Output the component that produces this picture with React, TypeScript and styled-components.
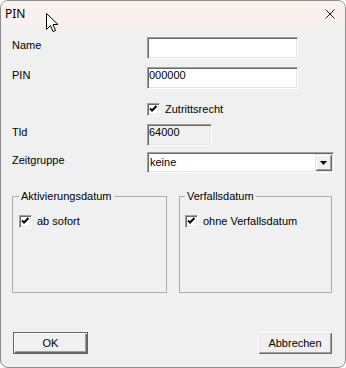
import React from "react";
import styled, { createGlobalStyle } from "styled-components";

const Global = createGlobalStyle`
  html, body { margin: 0; padding: 0; background: #ffffff; }
  * { box-sizing: border-box; }
`;

const Window = styled.div`
  position: relative;
  width: 346px;
  height: 368px;
  border: 1px solid #8c8c8c;
  border-radius: 8px;
  overflow: hidden;
  background: #f0f0f0;
  display: flex;
  flex-direction: column;
  font-family: "Liberation Sans", Arial, sans-serif;
  font-size: 11px;
  line-height: 13px;
  color: #000;
`;

const TitleBar = styled.div`
  height: 25px;
  flex: none;
  background: #f9f1ee;
  display: flex;
  align-items: center;
  justify-content: space-between;
  padding: 0 10px 0 4px;
`;

const Title = styled.span`
  font-family: "Noto Sans", "Open Sans", sans-serif;
  font-size: 12px;
  line-height: 16px;
  color: #000;
`;

const CloseIcon = styled.svg`
  width: 10px;
  height: 10px;
  display: block;
`;

const Cursor = styled.svg`
  position: absolute;
  left: 45px;
  top: 12px;
  width: 13px;
  height: 20px;
`;

const Body = styled.div`
  flex: 1;
  display: flex;
  flex-direction: column;
  padding: 0 13px 0 11px;
`;

const Row = styled.div<{ $mt: number; $h: number }>`
  display: grid;
  grid-template-columns: 135px auto;
  align-items: start;
  margin-top: ${(p) => p.$mt}px;
  height: ${(p) => p.$h}px;
`;

const Label = styled.span`
  padding-top: 2px;
  white-space: nowrap;
`;

const Edit = styled.div<{ $w: number; $bg?: string }>`
  width: ${(p) => p.$w}px;
  height: 22px;
  background: ${(p) => p.$bg || "#ffffff"};
  border: 1px solid;
  border-color: #a0a0a0 #ffffff #ffffff #a0a0a0;
  box-shadow: inset 1px 1px 0 #696969, inset -1px -1px 0 #e3e3e3;
  padding: 1px 2px 0 1px;
  white-space: nowrap;
`;

const Select = styled.div`
  width: 187px;
  height: 21px;
  background: #ffffff;
  border: 1px solid;
  border-color: #a0a0a0 #ffffff #ffffff #a0a0a0;
  box-shadow: inset 1px 1px 0 #696969, inset -1px -1px 0 #e3e3e3;
  padding: 1px 1px 1px 2px;
  display: flex;
  align-items: center;
  justify-content: space-between;
`;

const DropButton = styled.span`
  width: 17px;
  height: 17px;
  background: #f0f0f0;
  box-shadow: inset 1px 1px 0 #e3e3e3, inset -1px -1px 0 #696969,
    inset 2px 2px 0 #ffffff, inset -2px -2px 0 #a0a0a0;
  display: flex;
  align-items: center;
  justify-content: center;
`;

const CheckRow = styled.label`
  display: flex;
  align-items: center;
  gap: 5px;
  height: 20px;
  white-space: nowrap;
`;

const Box = styled.span`
  width: 13px;
  height: 13px;
  flex: none;
  background: #ffffff;
  border: 1px solid;
  border-color: #a0a0a0 #ffffff #ffffff #a0a0a0;
  box-shadow: inset 1px 1px 0 #696969, inset -1px -1px 0 #e3e3e3;
  display: flex;
  align-items: center;
  justify-content: center;
`;

const Groups = styled.div`
  display: grid;
  grid-template-columns: 155px 153px;
  column-gap: 12px;
  margin-top: 17px;
  height: 103px;
`;

const Group = styled.fieldset<{ $pl: number }>`
  margin: 0;
  padding: 8px ${(p) => p.$pl}px 0;
  border: 1px solid #adadad;
  min-width: 0;
`;

const Legend = styled.legend`
  padding: 0 2px;
  font-size: 11px;
  line-height: 13px;
`;

const Buttons = styled.div`
  display: flex;
  justify-content: space-between;
  margin-top: 39px;
  padding-left: 1px;
  padding-right: 0;
`;

const Button = styled.button<{ $default?: boolean }>`
  width: ${(p) => (p.$default ? 75 : 74)}px;
  height: 22px;
  font-family: "Liberation Sans", Arial, sans-serif;
  font-size: 11px;
  line-height: 13px;
  color: #000;
  background: #f0f0f0;
  padding: 0;
  border: ${(p) => (p.$default ? "1px solid #646464" : "none")};
  box-shadow: ${(p) =>
    p.$default
      ? "inset 1px 1px 0 #ffffff, inset -1px -1px 0 #696969, inset -2px -2px 0 #a0a0a0"
      : "inset 1px 1px 0 #ffffff, inset -1px -1px 0 #696969, inset 2px 2px 0 #e3e3e3, inset -2px -2px 0 #a0a0a0"};
`;

const Check = () => (
  <Box>
    <svg width="9" height="9" viewBox="0 0 9 9">
      <path d="M1 3.5 L3 5.5 L7.5 1" fill="none" stroke="#000" strokeWidth="2" />
    </svg>
  </Box>
);

export default function App() {
  return (
    <>
      <Global />
      <Window>
        <TitleBar>
          <Title>PIN</Title>
          <CloseIcon viewBox="0 0 10 10">
            <path d="M0.5 0.5 L9.5 9.5 M9.5 0.5 L0.5 9.5" stroke="#1a1a1a" strokeWidth="1" />
          </CloseIcon>
        </TitleBar>
        <Cursor viewBox="0 0 13 20">
          <path
            d="M0.5 0.5 L0.5 16.5 L4.5 12.5 L7 18.5 L9.5 17.5 L7 11.5 L12 11.5 Z"
            fill="#ffffff"
            stroke="#000"
            strokeWidth="1"
            strokeLinejoin="miter"
          />
        </Cursor>
        <Body>
          <Row $mt={11} $h={22}>
            <Label>Name</Label>
            <Edit $w={151} />
          </Row>
          <Row $mt={8} $h={22}>
            <Label>PIN</Label>
            <Edit $w={151}>000000</Edit>
          </Row>
          <Row $mt={10} $h={20}>
            <span />
            <CheckRow>
              <Check />
              Zutrittsrecht
            </CheckRow>
          </Row>
          <Row $mt={5} $h={22}>
            <Label>Tld</Label>
            <Edit $w={65} $bg="#f0f0f0">64000</Edit>
          </Row>
          <Row $mt={6} $h={21}>
            <Label>Zeitgruppe</Label>
            <Select>
              <span>keine</span>
              <DropButton>
                <svg width="7" height="4" viewBox="0 0 7 4">
                  <path d="M0 0 H7 L3.5 4 Z" fill="#000" />
                </svg>
              </DropButton>
            </Select>
          </Row>
          <Groups>
            <Group $pl={6}>
              <Legend>Aktivierungsdatum</Legend>
              <CheckRow>
                <Check />
                ab sofort
              </CheckRow>
            </Group>
            <Group $pl={5}>
              <Legend>Verfallsdatum</Legend>
              <CheckRow>
                <Check />
                ohne Verfallsdatum
              </CheckRow>
            </Group>
          </Groups>
          <Buttons>
            <Button $default>OK</Button>
            <Button>Abbrechen</Button>
          </Buttons>
        </Body>
      </Window>
    </>
  );
}
